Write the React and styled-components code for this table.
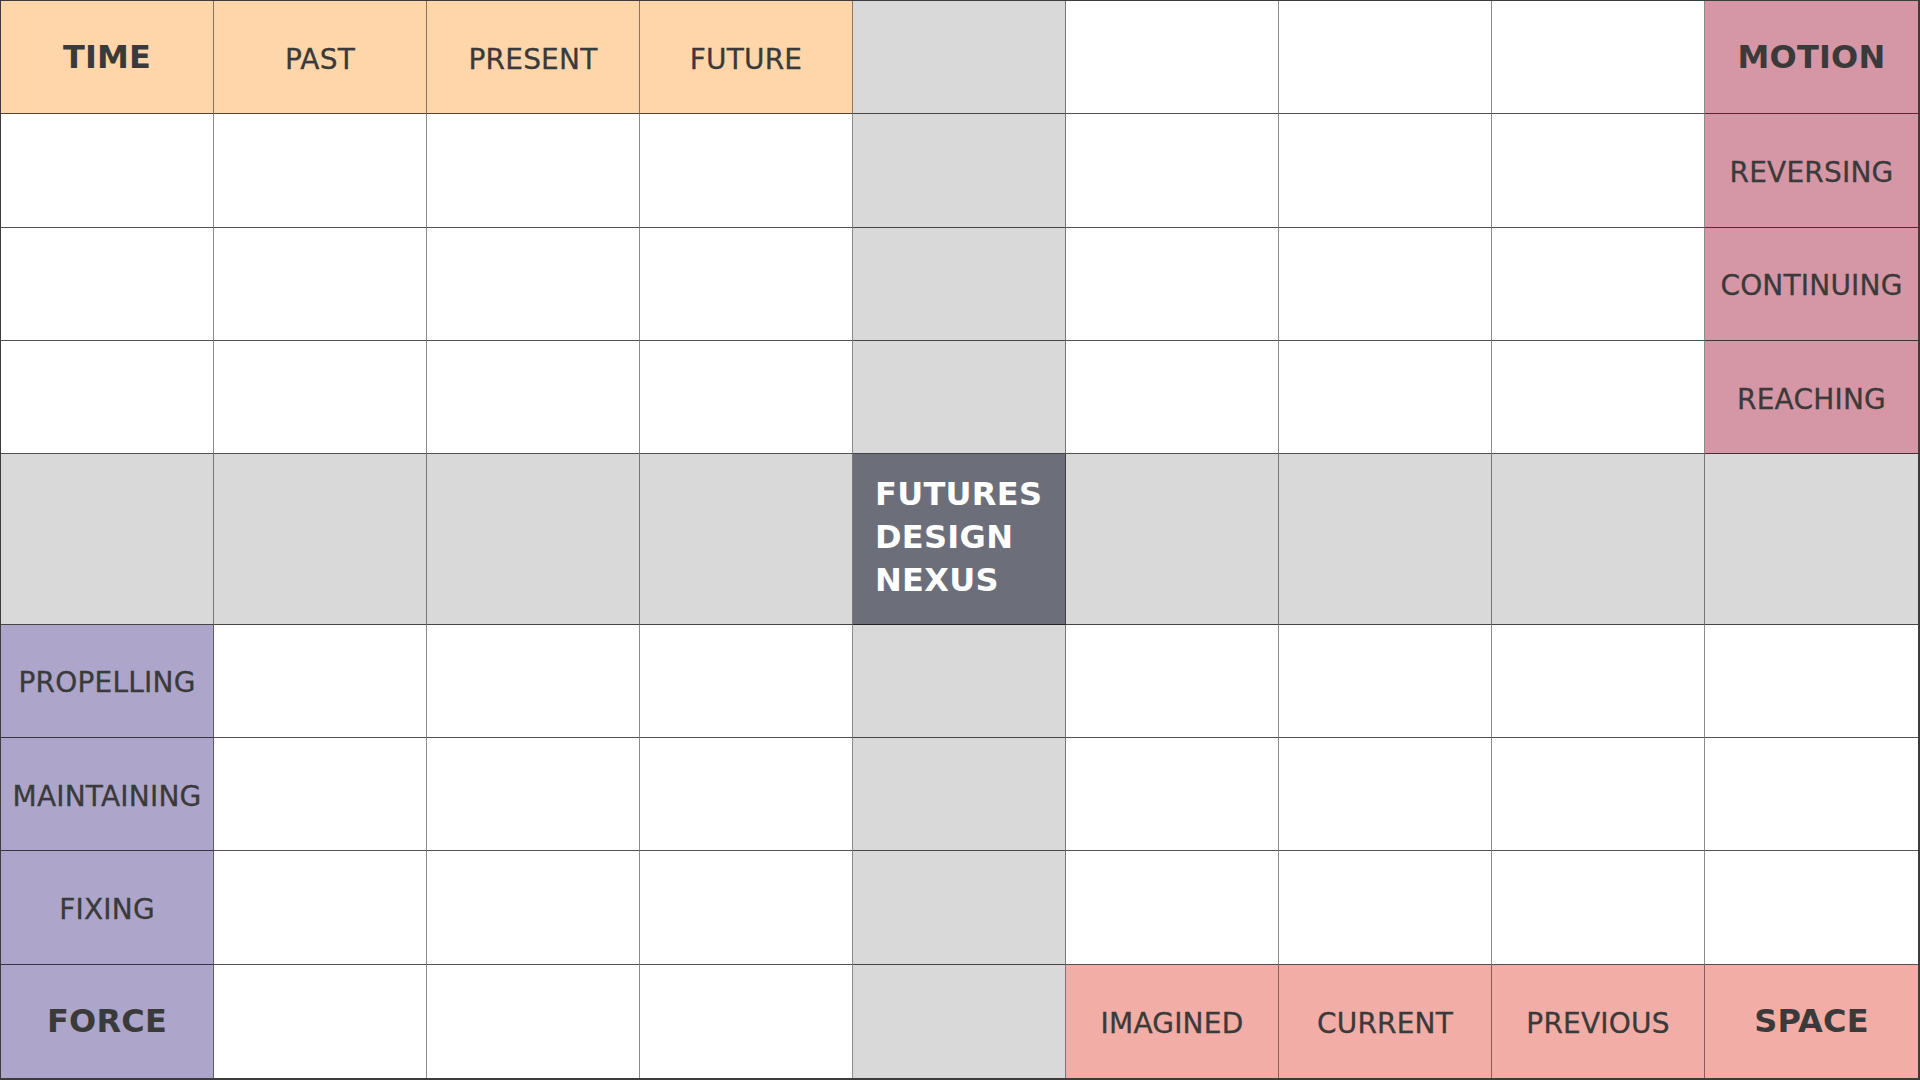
import React from "react";
import styled, { createGlobalStyle } from "styled-components";

const Global = createGlobalStyle`
  html, body { margin: 0; padding: 0; background: #ffffff; }
  #root { width: 100vw; height: 100vh; }
  * { box-sizing: border-box; }
`;

const palette = {
  white: "#ffffff",
  peach: "#fed6a9",
  pink: "#d596a6",
  purple: "#ada6ca",
  salmon: "#f1ada6",
  gray: "#d9d9d9",
  dark: "#6c6f7a",
};

const Board = styled.main`
  width: 100vw;
  height: 100vh;
  display: grid;
  grid-template-columns: repeat(9, 1fr);
  grid-template-rows: repeat(4, 2fr) 3fr repeat(4, 2fr);
  border: 1px solid #3c3c3c;
  border-right-width: 2px;
  border-bottom-width: 2px;
  font-family: "DejaVu Sans", "Liberation Sans", sans-serif;
  color: #3a3a3a;
`;

const Cell = styled.div`
  background: ${(p) => palette[p.$tone]};
  border-right: 1px solid rgba(0, 0, 0, 0.45);
  border-bottom: 1px solid rgba(0, 0, 0, 0.68);
  display: flex;
  align-items: center;
  justify-content: center;
  padding-top: ${(p) => (p.$bold ? "0" : "4px")};
  font-size: ${(p) => (p.$bold ? "32px" : "28px")};
  font-weight: ${(p) => (p.$bold ? 700 : 400)};
  letter-spacing: 0.2px;
  -webkit-text-stroke: ${(p) => (p.$bold ? "0" : "0.3px")};
  white-space: nowrap;
  &:nth-child(9n) { border-right: none; }
  &:nth-last-child(-n + 9) { border-bottom: none; }
`;

const Nexus = styled.div`
  background: ${palette.dark};
  border-right: 1px solid rgba(0, 0, 0, 0.45);
  border-bottom: 1px solid rgba(0, 0, 0, 0.68);
  display: flex;
  flex-direction: column;
  justify-content: center;
  padding: 0 0 2px 22px;
  color: #ffffff;
  font-size: 32px;
  font-weight: 700;
  line-height: 43px;
  letter-spacing: 0.3px;
`;

const W = { tone: "white" };
const G = { tone: "gray" };

const rows = [
  [
    { tone: "peach", text: "TIME", bold: true },
    { tone: "peach", text: "PAST" },
    { tone: "peach", text: "PRESENT" },
    { tone: "peach", text: "FUTURE" },
    G, W, W, W,
    { tone: "pink", text: "MOTION", bold: true },
  ],
  [W, W, W, W, G, W, W, W, { tone: "pink", text: "REVERSING" }],
  [W, W, W, W, G, W, W, W, { tone: "pink", text: "CONTINUING" }],
  [W, W, W, W, G, W, W, W, { tone: "pink", text: "REACHING" }],
  [G, G, G, G, { nexus: true }, G, G, G, G],
  [{ tone: "purple", text: "PROPELLING" }, W, W, W, G, W, W, W, W],
  [{ tone: "purple", text: "MAINTAINING" }, W, W, W, G, W, W, W, W],
  [{ tone: "purple", text: "FIXING" }, W, W, W, G, W, W, W, W],
  [
    { tone: "purple", text: "FORCE", bold: true },
    W, W, W, G,
    { tone: "salmon", text: "IMAGINED" },
    { tone: "salmon", text: "CURRENT" },
    { tone: "salmon", text: "PREVIOUS" },
    { tone: "salmon", text: "SPACE", bold: true },
  ],
];

export default function App() {
  return (
    <>
      <Global />
      <Board>
        {rows.flatMap((row, r) =>
          row.map((c, i) =>
            c.nexus ? (
              <Nexus key={`${r}-${i}`}>
                <span>FUTURES</span>
                <span>DESIGN</span>
                <span>NEXUS</span>
              </Nexus>
            ) : (
              <Cell key={`${r}-${i}`} $tone={c.tone} $bold={c.bold}>
                {c.text}
              </Cell>
            )
          )
        )}
      </Board>
    </>
  );
}
